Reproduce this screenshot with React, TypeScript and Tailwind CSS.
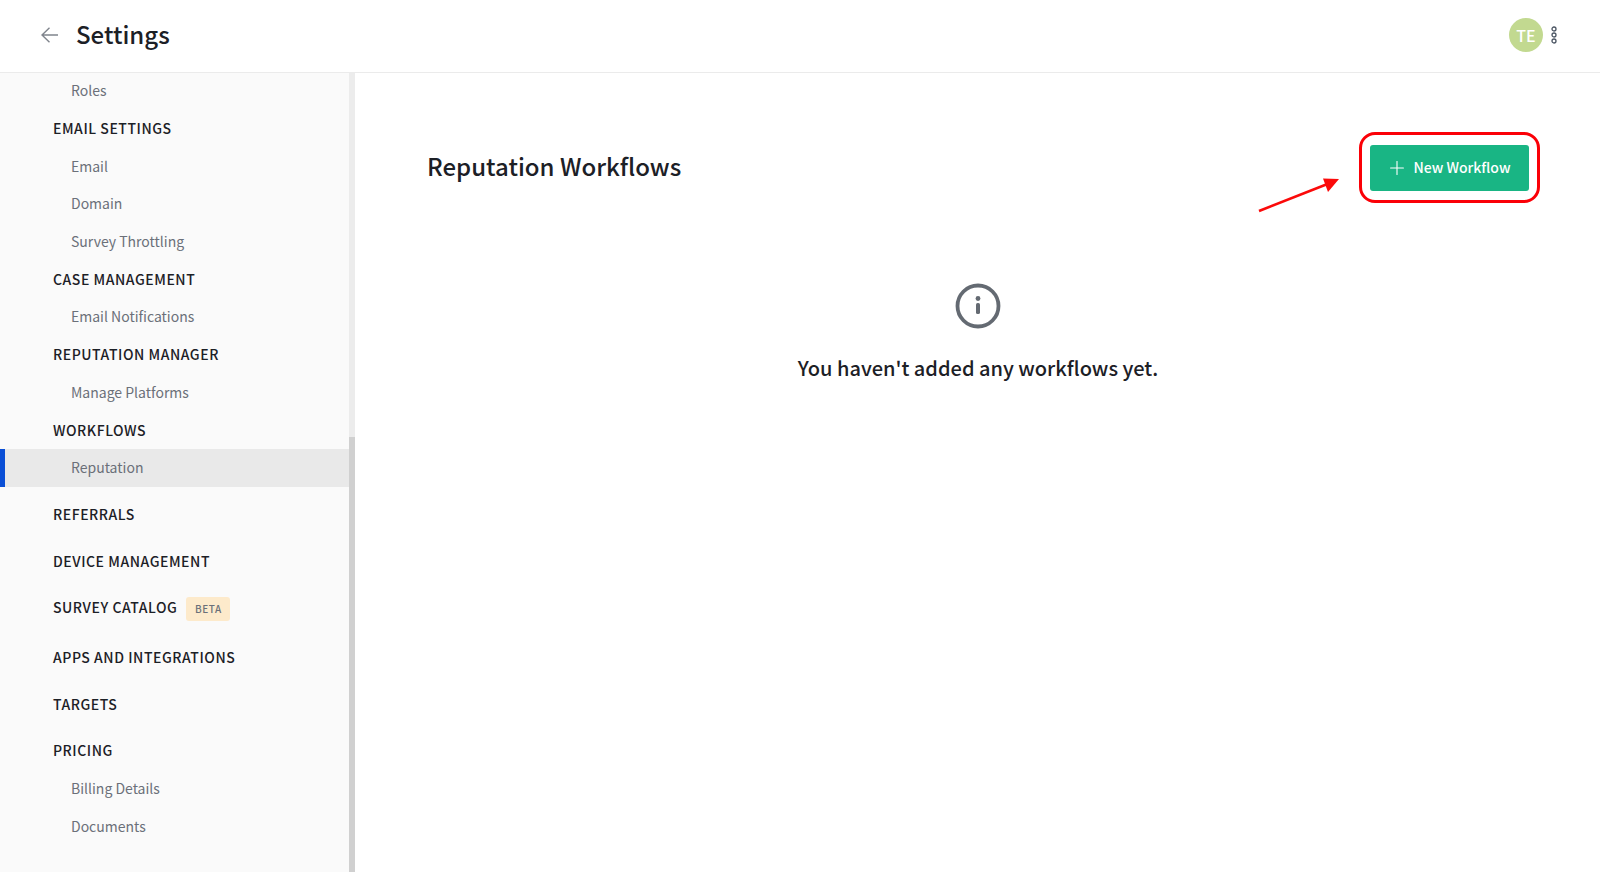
import React from 'react';
import { Plus } from 'lucide-react';

type NavItem = { label: string; kind: 'head' | 'sub' | 'solo'; active?: boolean; badge?: string };

const navItems: NavItem[] = [
  { label: 'Roles', kind: 'sub' },
  { label: 'EMAIL SETTINGS', kind: 'head' },
  { label: 'Email', kind: 'sub' },
  { label: 'Domain', kind: 'sub' },
  { label: 'Survey Throttling', kind: 'sub' },
  { label: 'CASE MANAGEMENT', kind: 'head' },
  { label: 'Email Notifications', kind: 'sub' },
  { label: 'REPUTATION MANAGER', kind: 'head' },
  { label: 'Manage Platforms', kind: 'sub' },
  { label: 'WORKFLOWS', kind: 'head' },
  { label: 'Reputation', kind: 'sub', active: true },
  { label: 'REFERRALS', kind: 'solo' },
  { label: 'DEVICE MANAGEMENT', kind: 'solo' },
  { label: 'SURVEY CATALOG', kind: 'solo', badge: 'BETA' },
  { label: 'APPS AND INTEGRATIONS', kind: 'solo' },
  { label: 'TARGETS', kind: 'solo' },
  { label: 'PRICING', kind: 'solo' },
  { label: 'Billing Details', kind: 'sub' },
  { label: 'Documents', kind: 'sub' },
];

const Row: React.FC<{ item: NavItem }> = ({ item }) => {
  if (item.kind === 'sub') {
    return (
      <div
        className={`h-[37.7px] shrink-0 flex items-center pl-[66px] text-[14px] text-[#6b7079] border-l-[5px] ${
          item.active ? 'bg-[#e9e9e9] border-[#0a4fd6]' : 'border-transparent'
        }`}
      >
        {item.label}
      </div>
    );
  }
  return (
    <div
      className={`shrink-0 flex items-center pl-[53px] text-[14px] font-medium tracking-[0.55px] text-[#1c2026] h-[37.7px] ${
        item.kind === 'solo' ? 'mt-[9px]' : ''
      } ${item.badge ? 'mb-[3px]' : ''}`}
    >
      {item.label}
      {item.badge && (
        <span className="ml-[9px] mt-[2px] w-[44px] h-[24px] rounded-[3px] bg-[#fdeacb] flex items-center justify-center text-[10px] font-medium tracking-[0.6px] text-[#6b7079]">
          {item.badge}
        </span>
      )}
    </div>
  );
};

export default function App() {
  return (
    <div
      className="relative h-[874px] w-[1600px] overflow-hidden bg-white flex flex-col"
      style={{ fontFamily: '"Noto Sans CJK SC", "Noto Sans", sans-serif' }}
    >
      <header className="relative z-10 h-[72px] shrink-0 flex items-center bg-white shadow-[0_1px_0_#ebebeb] pl-[41px] pr-[43px]">
        <svg className="mb-[3px]" width="17" height="16" viewBox="0 0 17 16" fill="none" stroke="#80858d" strokeWidth="1.4">
          <path d="M17 8H1M8.5 0.7L1 8l7.5 7.3" />
        </svg>
        <h1 className="ml-[18px] mb-[4px] text-[24px] font-medium leading-none text-[#1c2026]">Settings</h1>
        <div className="ml-auto mb-[2px] flex items-center">
          <div className="w-[34px] h-[34px] rounded-full bg-[#c2d990] flex items-center justify-center text-white text-[16px] font-medium">
            TE
          </div>
          <svg className="ml-[8px]" width="6" height="18" viewBox="0 0 6 18" fill="none" stroke="#4b5563" strokeWidth="1.3">
            <circle cx="3" cy="3" r="2" />
            <circle cx="3" cy="9" r="2" />
            <circle cx="3" cy="15" r="2" />
          </svg>
        </div>
      </header>

      <div className="flex flex-1 min-h-0">
        <aside className="w-[355px] h-[800px] shrink-0 flex">
          <nav className="w-[349px] bg-[#fafafa] flex flex-col overflow-hidden">
            {navItems.map((item) => (
              <Row key={item.label} item={item} />
            ))}
          </nav>
          <div className="w-[6px] flex flex-col bg-[#ececec]">
            <div className="h-[365px]" />
            <div className="flex-1 bg-[#d0d0d0]" />
          </div>
        </aside>

        <main className="flex-1 flex flex-col pl-[72px] pr-[71px]">
          <div className="h-[46px] flex items-center justify-between mt-[72.5px]">
            <h2 className="mb-[4px] text-[24px] font-medium text-[#1c2026] leading-[46px]">Reputation Workflows</h2>
            <button className="w-[159px] h-[46px] rounded-[3px] bg-[#19b584] text-white flex items-center justify-center gap-[6px] pr-[3px] text-[14px] font-medium">
              <Plus size={22} strokeWidth={1.2} />
              New Workflow
            </button>
          </div>
          <div className="flex flex-col items-center mt-[92px]">
            <svg width="46" height="46" viewBox="0 0 46 46" fill="none">
              <circle cx="23" cy="23" r="20.5" stroke="#646a72" strokeWidth="3.8" />
              <circle cx="23" cy="15.5" r="2.4" fill="#646a72" />
              <rect x="21" y="20" width="4" height="11" rx="1.6" fill="#646a72" />
            </svg>
            <p className="mt-[23px] text-[20px] font-medium leading-[32px] text-[#1c2026]">You haven't added any workflows yet.</p>
          </div>
        </main>
      </div>

      {/* red annotation over the button */}
      <div className="absolute left-[1359px] top-[132px] w-[181px] h-[71px] rounded-[16px] border-[3px] border-[#fb0007]" />
      <svg className="absolute left-[1250px] top-[170px]" width="100" height="50" viewBox="0 0 100 50" fill="none">
        <path d="M9 41L80 13" stroke="#fb0a0a" strokeWidth="2.6" />
        <path d="M89 9L73 8.5 78 22z" fill="#fb0a0a" />
      </svg>
    </div>
  );
}
